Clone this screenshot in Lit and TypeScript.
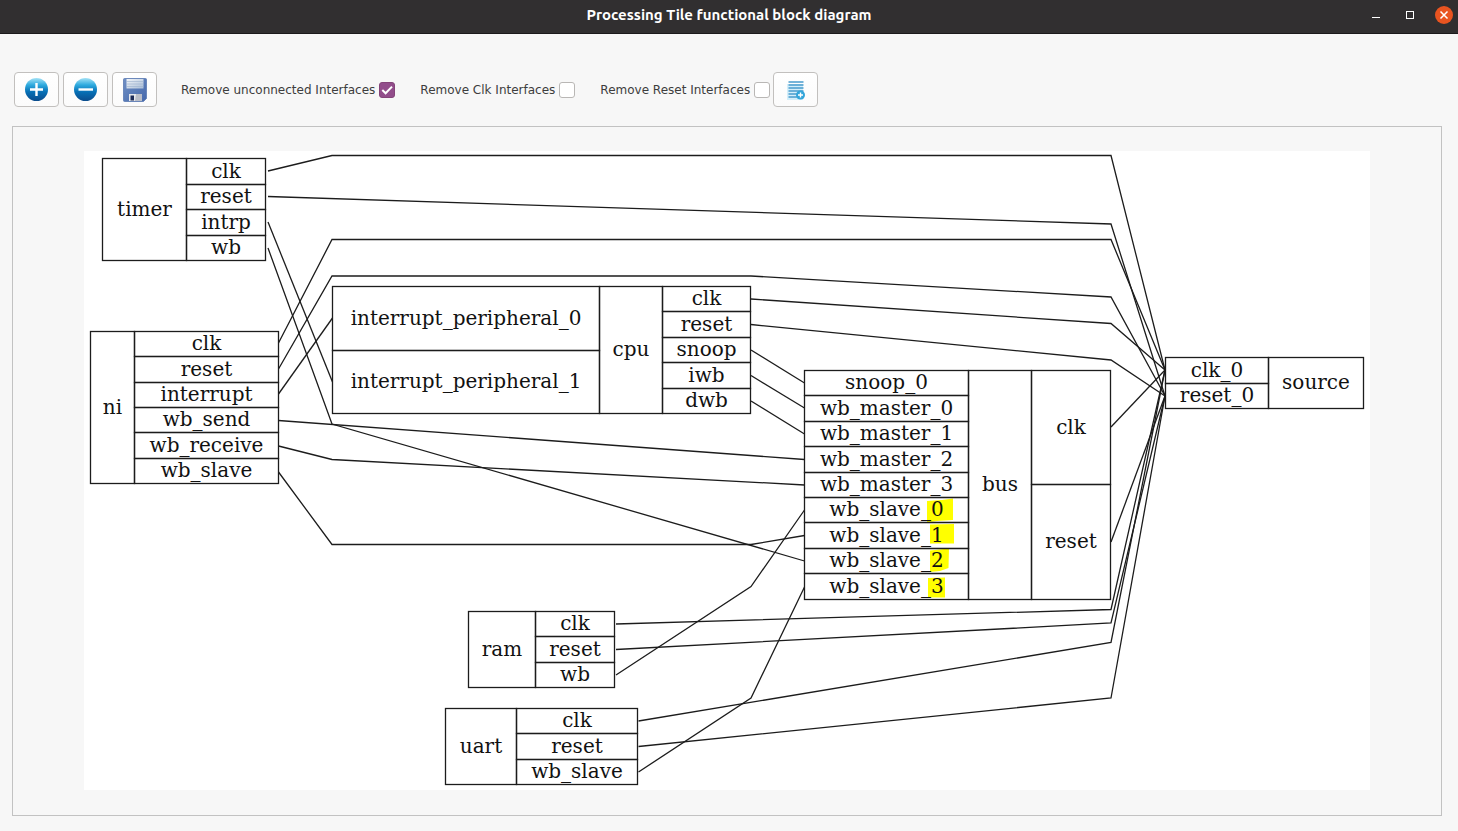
import { LitElement, html, svg, css } from "lit";
import { customElement, state } from "lit/decorators.js";

type Cell = { x: number; y: number; w: number; h: number; label: string };
type Block = { id: string; cells: Cell[] };

/** Aligns a coordinate to the pixel centre so that shared borders coincide. */
const snap = (v: number) => Math.floor(v) + 0.5;

/** Stacks equal-height cells in one column of a record block. */
const column = (x: number, right: number, y: number, h: number, labels: string[]): Cell[] =>
  labels.map((label, i) => {
    const top = snap(y + (h * i) / labels.length);
    const bottom = snap(y + (h * (i + 1)) / labels.length);
    return { x: snap(x), w: snap(right) - snap(x), y: top, h: bottom - top, label };
  });

const block = (id: string, y: number, h: number, edges: number[], columns: string[][]): Block => ({
  id,
  cells: columns.flatMap((labels, i) => column(edges[i], edges[i + 1], y, h, labels)),
});

const BLOCKS: Block[] = [
  block("timer", 158.5, 102, [102, 186, 265], [["timer"], ["clk", "reset", "intrp", "wb"]]),
  block("ni", 331.5, 152, [90, 134, 278], [["ni"], ["clk", "reset", "interrupt", "wb_send", "wb_receive", "wb_slave"]]),
  block("cpu", 286.5, 127, [332, 599, 662, 750], [["interrupt_peripheral_0", "interrupt_peripheral_1"], ["cpu"], ["clk", "reset", "snoop", "iwb", "dwb"]]),
  block("bus", 370.5, 228.5, [804, 968, 1031, 1110], [
    ["snoop_0", "wb_master_0", "wb_master_1", "wb_master_2", "wb_master_3", "wb_slave_0", "wb_slave_1", "wb_slave_2", "wb_slave_3"],
    ["bus"],
    ["clk", "reset"],
  ]),
  block("source", 357.5, 51, [1165, 1268, 1363], [["clk_0", "reset_0"], ["source"]]),
  block("ram", 611.5, 76, [468, 535, 614], [["ram"], ["clk", "reset", "wb"]]),
  block("uart", 708.5, 76, [445, 516, 637], [["uart"], ["clk", "reset", "wb_slave"]]),
];

const WIRES = [
  "268,171 332,155.5 1111,155.5 1165,370",
  "268,196.5 1111,224 1165,396",
  "268,222 332.5,382",
  "268,248 332,424 804.5,561",
  "278.5,343 332,239.5 1111,239.5 1165,370",
  "278.5,369 332,276 751,276 1111,297 1165,396",
  "278.5,394 332.5,318",
  "278.5,420.5 804.5,459.5",
  "278.5,446 332,459.5 804.5,485",
  "278.5,472 332,544.5 751,544.5 804.5,535.5",
  "751,299 1111,323.5 1165,370",
  "751,324.5 1111,360 1165,396",
  "751,350 804.5,383",
  "751,375.5 804.5,408",
  "751,401 804.5,434",
  "1111,427 1165,370",
  "1111,542 1165,396",
  "616,624 1111,609.5 1165,370",
  "616,649.5 1111,623 1165,396",
  "616,675 751,586.5 804.5,510",
  "638.5,721 1111,642.5 1165,370",
  "638.5,746.5 1111,698 1165,396",
  "638.5,772 751,698 804.5,587",
];

const MARKS = [
  "M927,501 L942,500 L953,498.5 L953,520 L937,521 L927,522.5Z",
  "M930,524.5 L954,524 L954,543.5 L930,543.5Z",
  "M930,550.5 L949,548.5 L948.5,568 L940,571 L930,572Z",
  "M928,578 L945,577.5 L945,597.5 L928,597.5Z",
];

@customElement("block-diagram")
export class BlockDiagram extends LitElement {
  static styles = css`
    :host { display: block; background: #fff; }
    .canvas { display: block; width: 100%; height: auto; }
    .frame, .wire { fill: none; stroke: #1c1c1c; stroke-width: 1.3; }
    .mark { fill: #ff0; }
    .label {
      font-family: "DejaVu Serif", serif;
      font-size: 20px;
      fill: #111;
      text-anchor: middle;
    }
  `;

  render() {
    return html`
      <svg class="canvas" viewBox="84 151 1286 639" role="img" aria-label="Functional block diagram">
        ${MARKS.map((d) => svg`<path class="mark" d=${d} />`)}
        ${WIRES.map((points) => svg`<polyline class="wire" points=${points} />`)}
        ${BLOCKS.map((b) => svg`
          <g>
            ${b.cells.map((c) => svg`
              <rect class="frame" x=${c.x} y=${c.y} width=${c.w} height=${c.h} />
              <text class="label" x=${c.x + c.w / 2} y=${c.y + c.h / 2 + 6}>${c.label}</text>`)}
          </g>`)}
      </svg>`;
  }
}

@customElement("app-root")
export class AppRoot extends LitElement {
  static styles = css`
    :host {
      display: flex;
      flex-direction: column;
      min-height: 100vh;
      box-sizing: border-box;
      background: #f7f7f7;
      color: #3d3d3d;
      font-family: "DejaVu Sans", sans-serif;
      font-size: 12px;
    }
    .titlebar {
      display: grid;
      grid-template-columns: 1fr auto 1fr;
      align-items: center;
      height: 34px;
      box-sizing: border-box;
      padding: 0 5px 3px;
      background: #312f30;
      border-bottom: 1px solid #1c1a1b;
      color: #fff;
    }
    .title {
      grid-column: 2;
      margin: 0;
      font: bold 15px/20px Ubuntu, "Noto Sans", sans-serif;
    }
    .controls { display: flex; justify-content: flex-end; align-items: center; gap: 16px; }
    .control { display: block; width: 18px; height: 18px; padding: 0; border: 0; background: none; }
    .control svg { display: block; }
    .toolbar { display: flex; align-items: center; padding: 38px 14px 19px; }
    .tool {
      display: flex;
      align-items: center;
      justify-content: center;
      width: 45px;
      height: 35px;
      padding: 0;
      box-sizing: border-box;
      border: 1px solid #c2c0be;
      border-radius: 4px;
      background: linear-gradient(#fff, #fbfbfb);
    }
    .tools { display: flex; gap: 4px; }
    .options { display: flex; align-items: center; gap: 25px; margin: 0 3px 0 24px; }
    .option { display: flex; align-items: center; gap: 4px; white-space: nowrap; }
    .check {
      appearance: none;
      width: 16px;
      height: 16px;
      margin: 0;
      box-sizing: border-box;
      border: 1px solid #b9b7b5;
      border-radius: 3px;
      background: #fff;
    }
    .check:checked {
      border-color: #844479;
      background: #924d8b url("data:image/svg+xml,%3Csvg xmlns='http://www.w3.org/2000/svg' viewBox='0 0 14 14'%3E%3Cpath d='M2.3 7 L5.6 10.3 L12 3.6' fill='none' stroke='white' stroke-width='2'/%3E%3C/svg%3E") center / 14px no-repeat;
    }
    .panel {
      margin: 0 16px 15px 12px;
      padding: 24px 71px 25px;
      border: 1px solid #c2c2c2;
    }
  `;

  @state() private options = [
    { id: "unconnected", label: "Remove unconnected Interfaces", on: true },
    { id: "clk", label: "Remove Clk Interfaces", on: false },
    { id: "reset", label: "Remove Reset Interfaces", on: false },
  ];

  private toggle(id: string) {
    this.options = this.options.map((o) => (o.id === id ? { ...o, on: !o.on } : o));
  }

  private ball(glyph: string) {
    return html`
      <svg width="24" height="24" viewBox="0 0 24 24" aria-hidden="true">
        <defs>
          <linearGradient id="ball" x1="0" y1="0" x2="0" y2="1">
            <stop offset="0" stop-color="#a4e2f6" />
            <stop offset="0.3" stop-color="#2fabdf" />
            <stop offset="0.6" stop-color="#0670b6" />
            <stop offset="1" stop-color="#0b4c8c" />
          </linearGradient>
        </defs>
        <circle cx="11.5" cy="11.5" r="11.5" fill="url(#ball)" />
        <path d=${glyph} stroke="#fff" stroke-width="2.4" />
      </svg>`;
  }

  render() {
    return html`
      <header class="titlebar">
        <h1 class="title">Processing Tile functional block diagram</h1>
        <div class="controls">
          <button class="control" aria-label="Minimize">
            <svg width="18" height="18" viewBox="0 0 18 18"><path d="M5 11.5h8" stroke="#fff" /></svg>
          </button>
          <button class="control" aria-label="Maximize">
            <svg width="18" height="18" viewBox="0 0 18 18"><rect x="5.5" y="5.5" width="7" height="7" fill="none" stroke="#fff" /></svg>
          </button>
          <button class="control" aria-label="Close">
            <svg width="18" height="18" viewBox="0 0 18 18">
              <circle cx="9" cy="9" r="9" fill="#e95420" />
              <path d="M5.5 5.5l7 7M12.5 5.5l-7 7" stroke="#fff" stroke-width="1.5" />
            </svg>
          </button>
        </div>
      </header>

      <div class="toolbar">
        <div class="tools">
          <button class="tool" aria-label="Zoom in">${this.ball("M11.5 5v13M5 11.5h13")}</button>
          <button class="tool" aria-label="Zoom out">${this.ball("M4.5 11.5h14.5")}</button>
          <button class="tool" aria-label="Save">
            <svg width="24" height="24" viewBox="0 0 24 24" aria-hidden="true">
              <defs>
                <linearGradient id="disk" x1="0" y1="0" x2="1" y2="1">
                  <stop offset="0" stop-color="#6f8fc4" />
                  <stop offset="1" stop-color="#4568ab" />
                </linearGradient>
                <linearGradient id="sheet" x1="0" y1="0" x2="1" y2="1">
                  <stop offset="0" stop-color="#f2f5f9" />
                  <stop offset="1" stop-color="#a9bdd6" />
                </linearGradient>
              </defs>
              <path d="M1.5 0.5h21q1 0 1 1v19l-3 3h-19q-1 0-1-1v-21q0-1 1-1z" fill="url(#disk)" stroke="#5b7ab2" stroke-width="0.8" />
              <path d="M3.5 1h17v9.500h-17z" fill="url(#sheet)" />
              <path d="M3.5 3.5h17M3.5 6h17M3.5 8.5h17" stroke="#9bb0cd" stroke-width="0.6" />
              <path d="M6 16h13v7H6z" fill="#e6e8ec" />
              <path d="M13 16h6v7h-7z" fill="#b9bdc7" />
              <path d="M7.5 17.500h3.5v5H7.500z" fill="#1d2c58" />
            </svg>
          </button>
        </div>
        <div class="options">
          ${this.options.map((o) => html`
            <div class="option">
              <label for=${o.id}>${o.label}</label>
              <input class="check" type="checkbox" id=${o.id} .checked=${o.on} @change=${() => this.toggle(o.id)} />
            </div>`)}
        </div>
        <button class="tool" aria-label="Add to report">
          <svg width="22" height="22" viewBox="0 0 22 22" aria-hidden="true">
            <path d="M2 5h16v16H2z" fill="#d3eefa" />
            <path d="M3.500 3h15M3.500 6h15M3.500 9h15M3.500 12h15M3.500 15h11M3.500 18h9" stroke="#4a9ccd" stroke-width="1.4" />
            <circle cx="15.500" cy="16" r="4.500" fill="#33a5da" />
            <path d="M15.500 13.500v5M13 16h5" stroke="#fff" stroke-width="1.4" />
          </svg>
        </button>
      </div>

      <main class="panel">
        <block-diagram></block-diagram>
      </main>
    `;
  }
}
